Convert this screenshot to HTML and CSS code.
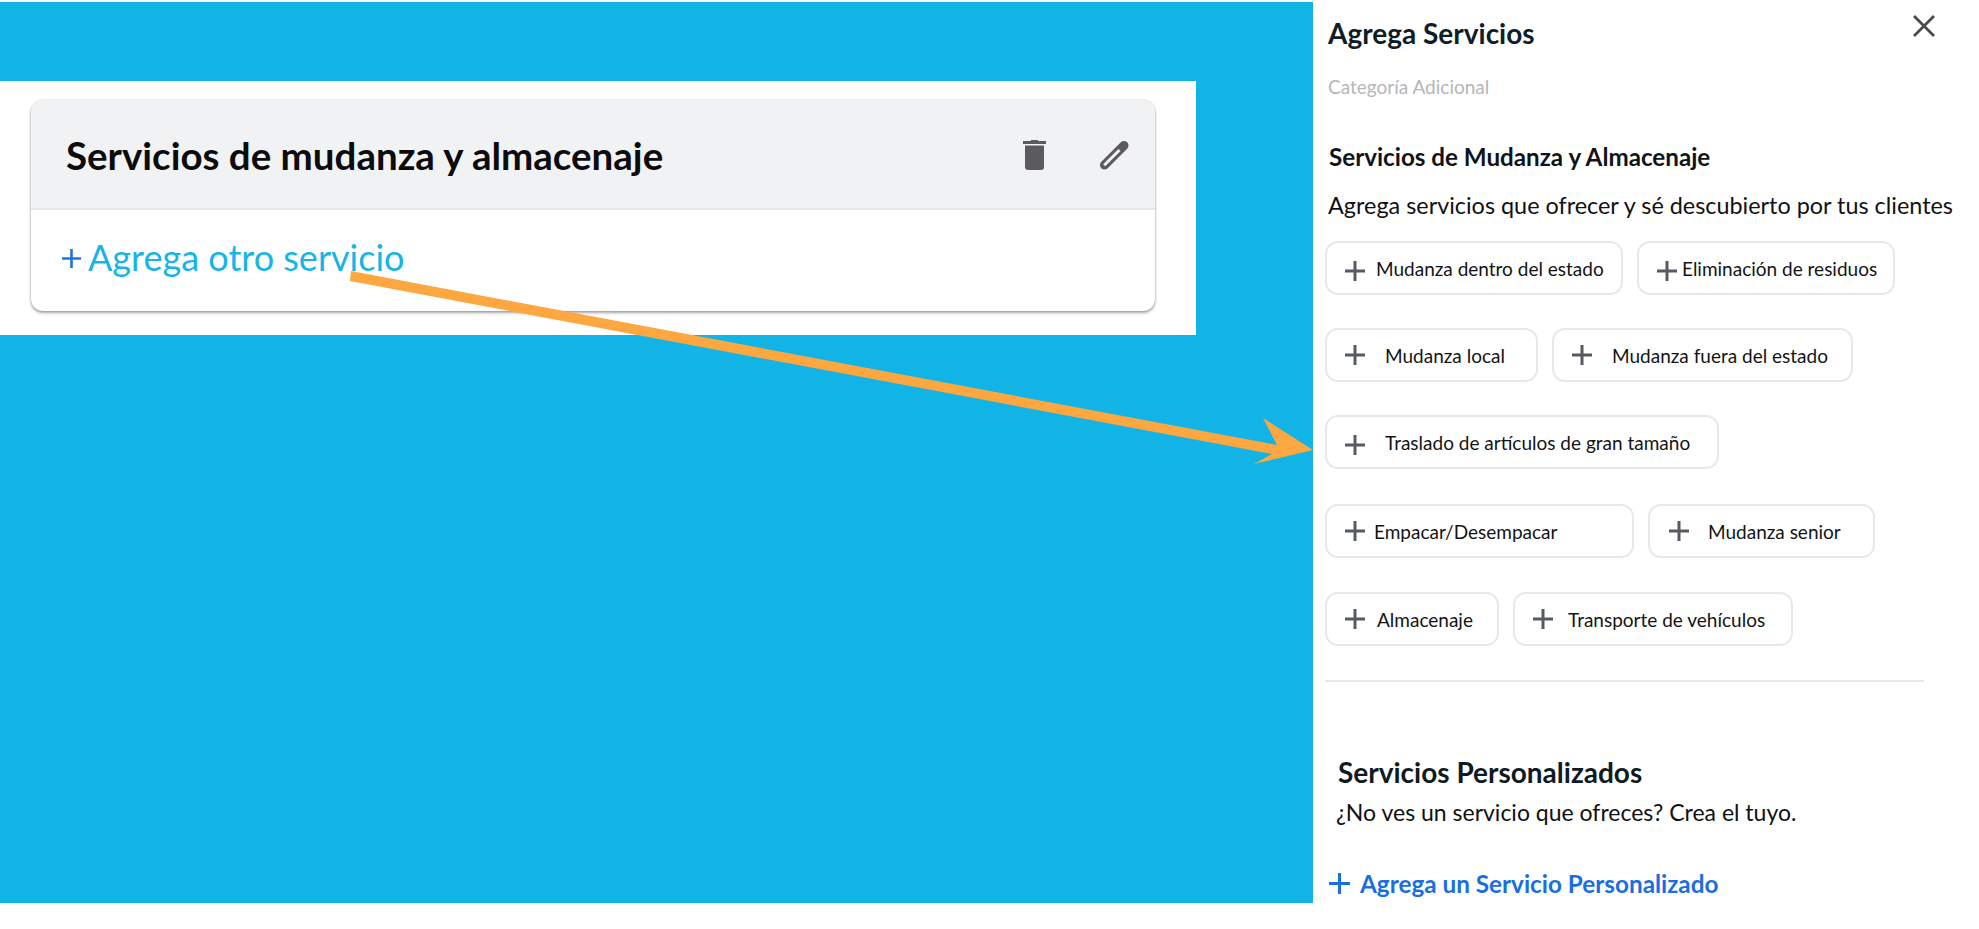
FILE: index.html
```html
<!DOCTYPE html>
<html lang="es">
<head>
<meta charset="utf-8">
<title>Agrega Servicios</title>
<link rel="stylesheet" href="styles.css">
</head>
<body>
<div class="page">
  <main class="stage">
    <section class="band">
      <article class="card">
        <header class="card-head">
          <h1 class="card-title">Servicios de mudanza y almacenaje</h1>
          <div class="card-actions">
            <svg class="ico-trash" viewBox="0 0 25 30" aria-hidden="true"><path d="M9 0h7v1h8v3H1V1h8z" fill="#5b5b5e"/><path d="M3 5.5h19v21.5a3 3 0 0 1-3 3H6a3 3 0 0 1-3-3z" fill="#5b5b5e"/></svg>
            <svg class="ico-pencil" viewBox="0 0 31 30" aria-hidden="true"><path d="M5.5 25L25 5.5" stroke="#5b5b5e" stroke-width="9" stroke-linecap="round" fill="none"/><path d="M5.2 25.3L20.5 10" stroke="#f1f2f4" stroke-width="3" fill="none"/></svg>
          </div>
        </header>
        <div class="card-body">
          <svg class="ico-plus-sm" viewBox="0 0 19 19" aria-hidden="true"><path d="M9.5 0v19M0 9.5h19" stroke="#1f73dc" stroke-width="2.6"/></svg>
          <span class="add-other">Agrega otro servicio</span>
        </div>
      </article>
    </section>
  </main>

  <aside class="panel">
    <div class="panel-top">
      <h2 class="panel-title">Agrega Servicios</h2>
      <svg class="ico-close" viewBox="0 0 22 22" aria-hidden="true"><path d="M1 1l20 20M21 1L1 21" stroke="#47494c" stroke-width="2.8"/></svg>
    </div>
    <p class="category">Categoría Adicional</p>
    <h3 class="group-title">Servicios de Mudanza y Almacenaje</h3>
    <p class="group-desc">Agrega servicios que ofrecer y sé descubierto por tus clientes</p>

    <div class="chips">
      <div class="chip-row">
        <div class="chip c-dentro"><svg class="ico-plus p-low" viewBox="0 0 20 20" aria-hidden="true"><path d="M10 0v20M0 10h20"/></svg><span>Mudanza dentro del estado</span></div>
        <div class="chip c-elim"><svg class="ico-plus p-low" viewBox="0 0 20 20" aria-hidden="true"><path d="M10 0v20M0 10h20"/></svg><span>Eliminación de residuos</span></div>
      </div>
      <div class="chip-row">
        <div class="chip c-local"><svg class="ico-plus" viewBox="0 0 20 20" aria-hidden="true"><path d="M10 0v20M0 10h20"/></svg><span>Mudanza local</span></div>
        <div class="chip c-fuera"><svg class="ico-plus" viewBox="0 0 20 20" aria-hidden="true"><path d="M10 0v20M0 10h20"/></svg><span>Mudanza fuera del estado</span></div>
      </div>
      <div class="chip-row">
        <div class="chip c-traslado"><svg class="ico-plus p-low" viewBox="0 0 20 20" aria-hidden="true"><path d="M10 0v20M0 10h20"/></svg><span>Traslado de artículos de gran tamaño</span></div>
      </div>
      <div class="chip-row row-4">
        <div class="chip c-empacar"><svg class="ico-plus" viewBox="0 0 20 20" aria-hidden="true"><path d="M10 0v20M0 10h20"/></svg><span>Empacar/Desempacar</span></div>
        <div class="chip c-senior"><svg class="ico-plus" viewBox="0 0 20 20" aria-hidden="true"><path d="M10 0v20M0 10h20"/></svg><span>Mudanza senior</span></div>
      </div>
      <div class="chip-row row-5">
        <div class="chip c-alm"><svg class="ico-plus" viewBox="0 0 20 20" aria-hidden="true"><path d="M10 0v20M0 10h20"/></svg><span>Almacenaje</span></div>
        <div class="chip c-trans"><svg class="ico-plus" viewBox="0 0 20 20" aria-hidden="true"><path d="M10 0v20M0 10h20"/></svg><span>Transporte de vehículos</span></div>
      </div>
    </div>

    <hr class="rule">

    <h3 class="custom-title">Servicios Personalizados</h3>
    <p class="custom-desc">¿No ves un servicio que ofreces? Crea el tuyo.</p>
    <div class="custom-add">
      <svg class="ico-plus-blue" viewBox="0 0 21 21" aria-hidden="true"><path d="M10.5 0v21M0 10.5h21"/></svg>
      <span>Agrega un Servicio Personalizado</span>
    </div>
  </aside>

  <svg class="arrow" viewBox="0 0 1979 929" aria-hidden="true">
    <path d="M351 271L1277 445L1263 418L1313 450L1254 464L1272 454L350 281z" fill="#fda741"/>
  </svg>
</div>
</body>
</html>
```
FILE: styles.css
```css
* { box-sizing: border-box; }
html, body { margin: 0; padding: 0; background: #fff; }
body { font-family: Lato, "Open Sans", sans-serif; color: #111; }
h1, h2, h3, p { margin: 0; }

.page { position: relative; display: flex; width: 1979px; height: 929px; overflow: hidden; }

.stage { width: 1313px; height: 901px; margin-top: 2px; background: #12b4e6; flex: none; padding-top: 79px; }
.band { width: 1196px; height: 254px; background: #fff; padding: 19px 0 0 31px; }
.card { width: 1124px; height: 211px; background: #fff; border-radius: 12px; overflow: hidden; box-shadow: 0 2px 3px rgba(0,0,0,.35), 0 0 2px rgba(0,0,0,.2); display: flex; flex-direction: column; }
.card-head { height: 110px; background: #f1f2f4; border-bottom: 2px solid #e4e5e8; display: flex; align-items: center; justify-content: space-between; padding: 0 25px 0 35px; flex: none; }
.card-title { font-size: 38.5px; font-weight: 700; color: #0c0c0f; margin-top: 2px; }
.card-actions { display: flex; align-items: center; gap: 52px; margin-top: 1px; }
.ico-trash { width: 25px; height: 30px; display: block; }
.ico-pencil { width: 31px; height: 30px; display: block; }
.card-body { flex: 1; display: flex; align-items: center; padding: 0 0 7px 31px; gap: 7px; }
.ico-plus-sm { width: 19px; height: 19px; display: block; margin-top: 2px; }
.add-other { font-size: 36px; color: #17b5e6; }

.panel { flex: 1; padding: 0 0 0 13px; display: flex; flex-direction: column; min-width: 0; }
.panel-top { display: flex; justify-content: space-between; height: 50px; padding: 15px 44px 0 2px; }
.panel-title { font-size: 28px; font-weight: 700; color: #0f1d28; line-height: 36px; }
.ico-close { width: 22px; height: 22px; display: block; }
.category { font-size: 19px; color: #b4b6b8; padding-left: 2px; line-height: 24px; margin-top: 25px; }
.group-title { font-size: 24.2px; font-weight: 700; color: #101418; padding-left: 3px; line-height: 30px; margin-top: 43px; }
.group-desc { font-size: 23.4px; color: #111; padding-left: 2px; line-height: 30px; margin-top: 18px; }

.chips { display: flex; flex-direction: column; gap: 33px; margin: 21px 0 0 -1px; }
.chip-row { display: flex; gap: 14px; height: 54px; }
.row-4 { margin-top: 2px; }
.row-5 { margin-top: 1px; }
.chip { height: 100%; border: 2.5px solid #e6e9ec; border-radius: 13px; background: #fff; display: flex; align-items: center; padding-left: 18px; font-size: 19px; color: #141414; }
.ico-plus { width: 20px; height: 20px; flex: none; display: block; }
.ico-plus path { stroke: #565b63; stroke-width: 3; fill: none; }
.p-low { margin-top: 5px; }

.c-dentro { width: 298px; gap: 11px; }
.c-elim { width: 258px; gap: 5px; }
.c-local { width: 213px; gap: 20px; }
.c-fuera { width: 301px; gap: 20px; }
.c-traslado { width: 394px; gap: 20px; }
.c-empacar { width: 309px; gap: 9px; }
.c-senior { width: 227px; gap: 19px; padding-left: 19px; }
.c-alm { width: 174px; gap: 12px; }
.c-trans { width: 280px; gap: 15px; }

.rule { width: 599px; height: 2px; background: #e8e8e8; border: 0; margin: 34px 0 0 -1px; }

.custom-title { font-size: 28px; font-weight: 700; color: #101a22; padding-left: 12px; line-height: 32px; margin-top: 74px; }
.custom-desc { font-size: 23px; color: #111; padding-left: 10px; line-height: 30px; margin-top: 9px; }
.custom-add { display: flex; align-items: center; gap: 10px; margin-top: 42px; padding-left: 3px; color: #1a6fe0; font-size: 24.3px; font-weight: 700; }
.ico-plus-blue { width: 21px; height: 21px; display: block; flex: none; }
.ico-plus-blue path { stroke: #1a6fe0; stroke-width: 3; fill: none; }

.arrow { position: absolute; left: 0; top: 0; width: 1979px; height: 929px; pointer-events: none; }
```
